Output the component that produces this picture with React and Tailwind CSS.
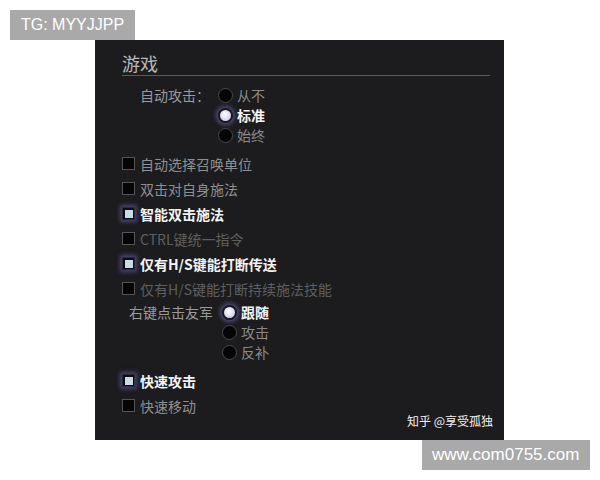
import React from "react";

const cjk = { fontFamily: '"Noto Sans CJK SC", "Noto Sans", sans-serif' };

function Radio({ on }) {
  return on ? (
    <span className="inline-block w-[15px] h-[15px] rounded-full border-2 border-[#1a1a24] bg-[radial-gradient(circle_at_45%_40%,#ffffff_0%,#e2e2f2_45%,#b8b8d8_100%)] shadow-[0_0_4px_2px_rgba(130,120,210,0.55)] shrink-0" />
  ) : (
    <span className="inline-block w-[15px] h-[15px] rounded-full border border-[#4a4a4a] bg-[#050505] shrink-0" />
  );
}

function Check({ on }) {
  return on ? (
    <span className="inline-flex items-center justify-center w-[13px] h-[13px] bg-[#0c0c12] border border-[#2a2a3a] shadow-[0_0_4px_2px_rgba(120,110,200,0.5)] shrink-0">
      <span className="block w-[8px] h-[8px] bg-[#c9dde6]" />
    </span>
  ) : (
    <span className="inline-block w-[13px] h-[13px] bg-[#050505] border border-[#555555] shrink-0" />
  );
}

function CheckRow({ label, state }) {
  const color =
    state === "on"
      ? "text-[#f4f4f4] font-bold"
      : state === "dim"
      ? "text-[#5f5f5f]"
      : "text-[#8f8f8f]";
  return (
    <div className="h-[25px] flex items-center gap-[5px]">
      <Check on={state === "on"} />
      <span className={`text-[14px] leading-[18px] ${color}`}>{label}</span>
    </div>
  );
}

function RadioRow({ label, on }) {
  return (
    <div className="h-[20px] flex items-center gap-[4px]">
      <Radio on={on} />
      <span
        className={`text-[14px] leading-[18px] ${
          on ? "text-[#f4f4f4] font-bold" : "text-[#8a8a8a]"
        }`}
      >
        {label}
      </span>
    </div>
  );
}

export default function App() {
  return (
    <div className="w-[600px] h-[480px] bg-white overflow-hidden" style={cjk}>
      <div className="pt-[10px] pl-[10px]">
        <div
          className="w-[125px] h-[30px] bg-[#a9a9a9] text-white text-[16px] leading-[30px] pl-[11px]"
          style={{ fontFamily: '"Liberation Sans", Arial, sans-serif' }}
        >
          TG: MYYJJPP
        </div>
      </div>
      <div className="relative ml-[95px] w-[409px] h-[400px] bg-[#1c1c1e] pl-[27px] pt-[12px]">
        <div className="mr-[14px] h-[24px] border-b border-[#5a5a5a] text-[18px] leading-[22px] text-[#b9b9b9]">
          游戏
        </div>

        <div className="mt-[9px] flex">
          <div className="w-[96px] pl-[18px] h-[20px] flex items-center text-[14px] text-[#9a9a9a]">
            自动攻击：
          </div>
          <div className="flex flex-col">
            <RadioRow label="从不" />
            <RadioRow label="标准" on />
            <RadioRow label="始终" />
          </div>
        </div>

        <div className="mt-[6px] flex flex-col">
          <CheckRow label="自动选择召唤单位" />
          <CheckRow label="双击对自身施法" />
          <CheckRow label="智能双击施法" state="on" />
          <CheckRow label="CTRL键统一指令" state="dim" />
          <CheckRow label="仅有H/S键能打断传送" state="on" />
          <CheckRow label="仅有H/S键能打断持续施法技能" state="dim" />
        </div>

        <div className="mt-[1px] flex">
          <div className="w-[100px] pl-[7px] h-[20px] flex items-center text-[14px] text-[#9a9a9a]">
            右键点击友军
          </div>
          <div className="flex flex-col">
            <RadioRow label="跟随" on />
            <RadioRow label="攻击" />
            <RadioRow label="反补" />
          </div>
        </div>

        <div className="mt-[6px] flex flex-col">
          <CheckRow label="快速攻击" state="on" />
          <CheckRow label="快速移动" />
        </div>

        <div className="absolute right-[11px] bottom-[11px] text-[12px] leading-[16px] text-[#f0f0f0]">
          知乎 @享受孤独
        </div>
      </div>
      <div className="ml-[422px] w-[168px] h-[30px] bg-[#a9a9a9] text-white text-[17px] leading-[30px] pl-[10px]"
        style={{ fontFamily: '"Liberation Sans", Arial, sans-serif' }}
      >
        www.com0755.com
      </div>
    </div>
  );
}
